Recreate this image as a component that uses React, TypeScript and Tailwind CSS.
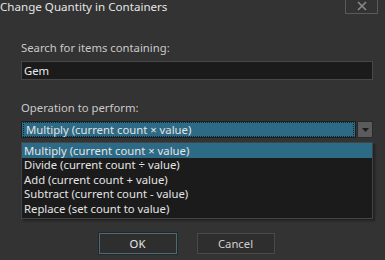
const options = [
  'Multiply (current count × value)',
  'Divide (current count ÷ value)',
  'Add (current count + value)',
  'Subtract (current count - value)',
  'Replace (set count to value)',
]

export default function App() {
  return (
    <div className="relative h-[260px] w-[385px] overflow-hidden bg-[#333333] font-['Noto_Sans',sans-serif] text-[11.3px] leading-[14px] text-[#d6d6d6]">
      <div className="flex h-[15px] items-start justify-between">
        <span className="text-[11.6px] leading-[13px] text-[#e6e6e6]">Change Quantity in Containers</span>
        <div className="mr-[7px] -mt-px flex h-[15px] w-[33px] items-center justify-center border border-[#5a5a5a] bg-[#333333]">
          <svg width="10" height="10" viewBox="0 0 10 10" className="-mt-[2px]">
            <path d="M1 1 L9 9 M9 1 L1 9" stroke="#8a8a8a" strokeWidth="1.6" />
          </svg>
        </div>
      </div>

      <div className="px-[21px] pt-[26px]">
        <div className="text-[#c9c9c9]">Search for items containing:</div>
        <div className="mt-[6px] flex h-[19px] w-[352px] items-center border border-[#484848] bg-[#1b1b1b] px-[2px] text-[#ececec]">
          Gem
        </div>

        <div className="mt-[21px] text-[#c9c9c9]">Operation to perform:</div>
        <div className="mt-[6px] flex h-[17px] w-[352px] items-stretch">
          <div className="flex flex-1 items-center border border-[#1e1e1e] bg-[#2d6a85] px-px">
            <div className="flex h-full w-full items-center border border-dotted border-[#10222b] pl-[2px] text-[#e2e2e2]">
              Multiply (current count × value)
            </div>
          </div>
          <div className="ml-px flex w-[16px] items-center justify-center border border-[#2a2a2a] bg-[#5b5b5b]">
            <svg width="7" height="4" viewBox="0 0 7 4">
              <path d="M0 0 L7 0 L3.5 4 Z" fill="#1c1c1c" />
            </svg>
          </div>
        </div>
      </div>

      <div className="absolute left-[21px] top-[142px] w-[352px] border border-[#444444] bg-[#1b1b1b] pb-[2px] shadow-[2px_2px_2px_rgba(0,0,0,0.35)]">
        {options.map((o, i) => (
          <div
            key={o}
            className={
              i === 0
                ? 'flex h-[15px] items-center bg-[#2d6a85] pl-[2px] text-[#e4e4e4]'
                : 'flex h-[14.5px] items-center pl-[2px] text-[#e4e4e4]'
            }
          >
            {o}
          </div>
        ))}
      </div>

      <div className="absolute left-0 top-[233px] flex w-full justify-center gap-[20px] pr-[12px]">
        <button className="flex h-[21px] w-[78px] items-center justify-center border border-[#486b7a] bg-[#2e2e2e] text-[#e6e6e6] outline outline-1 outline-[#262626]">
          OK
        </button>
        <button className="flex h-[21px] w-[78px] items-center justify-center border border-[#4a4a4a] bg-[#2e2e2e] text-[#cfcfcf]">
          Cancel
        </button>
      </div>
    </div>
  )
}
